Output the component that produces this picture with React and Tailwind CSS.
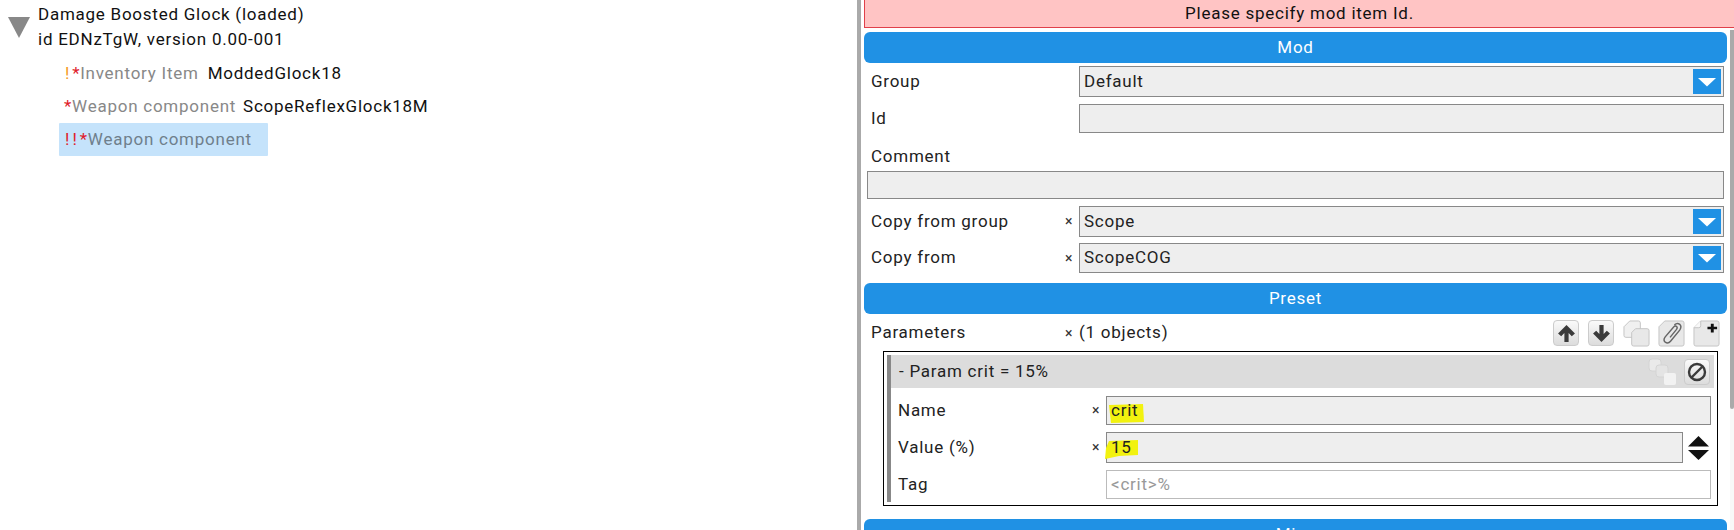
import React from 'react';

function Chevron() {
    return (
        <span className="absolute right-[2px] top-[2px] bottom-[2px] w-[28px] bg-[#2091e4] flex items-center justify-center">
            <svg width="20" height="10" viewBox="0 0 20 10">
                <polygon points="1,1 19,1 10,9.5" fill="#fff" />
            </svg>
        </span>
    );
}

function Input({ value, select, className = '', children }) {
    return (
        <div className={`relative flex items-center pl-[4px] border border-[#888] bg-[#eee] text-[#222] ${className}`}>
            {children}
            <span className="relative">{value}</span>
            {select && <Chevron />}
        </div>
    );
}

function Row({ label, x, className = '', children }) {
    return (
        <div className={`flex items-center ${className}`}>
            <span className="w-[201px] pl-[7px] text-[#222]">{label}</span>
            <span className="w-[14px] text-[14px] text-[#333]">{x ? '×' : ''}</span>
            {children}
        </div>
    );
}

function Header({ title, className = '' }) {
    return (
        <div className={`h-[31px] rounded-[6px] bg-[#2091e4] text-white flex items-center justify-center ${className}`}>
            {title}
        </div>
    );
}

function IconButton({ children, className = '' }) {
    return (
        <div className={`w-[26px] h-[26px] rounded-[4px] border border-[#ccc] bg-gradient-to-b from-[#fafafa] to-[#dcdcdc] flex items-center justify-center ${className}`}>
            {children}
        </div>
    );
}

function Page({ children }) {
    return (
        <svg width="27" height="27" viewBox="0 0 28 28">
            {children}
        </svg>
    );
}

function ToolIcons() {
    return (
        <div className="flex items-center gap-[8px]">
            <IconButton>
                <svg width="19" height="19" viewBox="0 0 18 18"><path d="M9 1 L17 9 L14 11.5 L11 8.5 V17 H7 V8.5 L4 11.5 L1 9 Z" fill="#3b3b3b" /></svg>
            </IconButton>
            <IconButton className="ml-[1px]">
                <svg width="19" height="19" viewBox="0 0 18 18"><path d="M9 17 L17 9 L14 6.5 L11 9.5 V1 H7 V9.5 L4 6.5 L1 9 Z" fill="#3b3b3b" /></svg>
            </IconButton>
            <div className="ml-[1px] flex">
                <Page>
                    <path d="M7 1 H16 Q18 1 18 3 V18 H3 Q1 18 1 16 V7 Z" fill="#f0f0f0" stroke="#c4c4c4" />
                    <path d="M13 9 H25 Q27 9 27 11 V25 Q27 27 25 27 H11 Q9 27 9 25 V13 Z" fill="#e8e8e8" stroke="#c4c4c4" />
                </Page>
            </div>
            <Page>
                <path d="M7 1 H25 Q27 1 27 3 V25 Q27 27 25 27 H3 Q1 27 1 25 V7 Z" fill="#e8e8e8" stroke="#c4c4c4" />
                <path d="M12.5 18 L19 10 Q20.5 8 19.5 7 Q18 5.5 16 7.5 L7.5 17.5 Q5 21 7.5 23 Q10.5 25 13 22 L22.5 10.5 Q25 7 22.5 4.5 Q20 2.5 17 5" fill="none" stroke="#666" strokeWidth="1.5" />
            </Page>
            <Page>
                <path d="M8 1 H25 Q27 1 27 3 V25 Q27 27 25 27 H3 Q1 27 1 25 V8 Z" fill="#e8e8e8" stroke="#c4c4c4" />
                <path d="M1 8 H6 Q8 8 8 6 V1" fill="#f8f8f8" stroke="#c4c4c4" />
                <path d="M18.5 4 H21.5 V7 H25 V9.5 H21.5 V13 H18.5 V9.5 H15 V7 H18.5 Z" fill="#111" />
            </Page>
        </div>
    );
}

function ParamBox() {
    return (
        <div className="ml-[19px] mr-[9px] mt-[2px] h-[155px] border border-black p-[3px]">
            <div className="h-full border-l-[4px] border-[#888]">
                <div className="h-[33px] bg-[#dcdcdc] flex items-center justify-between pl-[8px] pr-[4px] text-[#222]">
                    <span>- Param crit = 15%</span>
                    <div className="flex items-center gap-[8px]">
                        <svg width="28" height="27" viewBox="0 0 28 27">
                            <rect x="1" y="1" width="12" height="12" rx="3" fill="#eaeaea" stroke="#d4d4d4" />
                            <rect x="8" y="7" width="12" height="12" rx="3" fill="#e4e4e4" stroke="#d4d4d4" />
                            <rect x="16" y="15" width="12" height="12" rx="2" fill="#f2f2f2" />
                        </svg>
                        <IconButton>
                            <svg width="20" height="20" viewBox="0 0 20 20">
                                <circle cx="10" cy="10" r="8" fill="none" stroke="#3b3b3b" strokeWidth="2.4" />
                                <line x1="4.5" y1="15.5" x2="15.5" y2="4.5" stroke="#3b3b3b" strokeWidth="2.4" />
                            </svg>
                        </IconButton>
                    </div>
                </div>
                <div className="flex items-center mt-[8px] h-[29px] pr-[3px]">
                    <span className="w-[201px] pl-[7px] text-[#222]">Name</span>
                    <span className="w-[14px] text-[14px] text-[#333]">×</span>
                    <Input value="crit" className="flex-1 h-full">
                        <svg className="absolute left-[2px] top-[7px]" width="36" height="20" viewBox="0 0 36 20">
                            <path d="M0 1 L34 0 L35 18 L2 19 Z" fill="#f2f20f" />
                        </svg>
                    </Input>
                </div>
                <div className="flex items-center mt-[7px] h-[31px] pr-[3px]">
                    <span className="w-[201px] pl-[7px] text-[#222]">Value (%)</span>
                    <span className="w-[14px] text-[14px] text-[#333]">×</span>
                    <Input value="15" className="flex-1 h-full mr-[3px]">
                        <svg className="absolute left-[-2px] top-[7px]" width="36" height="20" viewBox="0 0 36 20">
                            <path d="M4 1 L33 0 L33 15 L14 16 L0 19 L1 8 Z" fill="#f2f20f" />
                        </svg>
                    </Input>
                    <svg width="25" height="26" viewBox="0 0 25 26">
                        <polygon points="2,11.5 12.5,1 23,11.5" fill="#111" />
                        <polygon points="2,15 23,15 12.5,25" fill="#111" />
                    </svg>
                </div>
                <div className="flex items-center mt-[7px] h-[29px] pr-[3px]">
                    <span className="w-[201px] pl-[7px] text-[#222]">Tag</span>
                    <span className="w-[14px]"></span>
                    <div className="flex-1 h-full flex items-center pl-[4px] border border-[#bbb] bg-white text-[#999]">&lt;crit&gt;%</div>
                </div>
            </div>
        </div>
    );
}

export default function App() {
    return (
        <div className="relative flex h-[530px] w-[1734px] overflow-hidden bg-white text-[17px] tracking-[0.75px] font-['Roboto','Liberation_Sans',sans-serif]">
            <div className="w-[857px] shrink-0 pl-[8px] pt-[2px] text-[#111]">
                <div className="flex">
                    <svg className="mt-[15px] mr-[8px]" width="22" height="21" viewBox="0 0 22 21">
                        <polygon points="0,0 22,0 11,21" fill="#888" />
                    </svg>
                    <div className="leading-[25px]">
                        <div>Damage Boosted Glock (loaded)</div>
                        <div>id EDNzTgW, version 0.00-001</div>
                    </div>
                </div>
                <div className="ml-[51px] mt-[5px] w-fit min-w-[209px]">
                    <div className="h-[33px] pl-[6px] flex items-center gap-[9px]">
                        <span><span className="text-[#f59a23] mr-[2px]">!</span><span className="text-[#e0202a]">*</span><span className="text-[#888]">Inventory Item</span></span>
                        <span>ModdedGlock18</span>
                    </div>
                    <div className="h-[33px] pl-[5px] flex items-center gap-[7px] whitespace-nowrap">
                        <span><span className="text-[#e0202a]">*</span><span className="text-[#888]">Weapon component</span></span>
                        <span>ScopeReflexGlock18M</span>
                    </div>
                    <div className="h-[33px] w-[209px] pl-[6px] flex items-center bg-[#c5e3fb] rounded-[1px]">
                        <span className="text-[#e0202a] tracking-[3px]">!!</span><span className="text-[#e0202a]">*</span><span className="text-[#6f7f8c]">Weapon component</span>
                    </div>
                </div>
            </div>
            <div className="w-[4px] shrink-0 bg-[#aaa]"></div>
            <div className="flex-1 flex flex-col min-w-0 pl-[3px]">
                <div className="h-[28px] shrink-0 bg-[#ffc4c4] border-b border-l border-[#e0404a] flex items-center justify-center text-[#111]">
                    Please specify mod item Id.
                </div>
                <div className="flex-1 flex min-h-0">
                    <div className="flex-1 min-w-0 pt-[4px]">
                        <Header title="Mod" />
                        <Row label="Group" className="mt-[3px] h-[31px]">
                            <Input value="Default" select className="flex-1 h-full mr-[3px]" />
                        </Row>
                        <Row label="Id" className="mt-[7px] h-[29px]">
                            <Input className="flex-1 h-full mr-[3px]" />
                        </Row>
                        <div className="h-[38px] flex items-center pl-[7px] pt-[9px] text-[#222]">Comment</div>
                        <Input className="ml-[3px] mr-[3px] h-[28px]" />
                        <Row label="Copy from group" x className="mt-[7px] h-[31px]">
                            <Input value="Scope" select className="flex-1 h-full mr-[3px]" />
                        </Row>
                        <Row label="Copy from" x className="mt-[6px] h-[30px]">
                            <Input value="ScopeCOG" select className="flex-1 h-full mr-[3px]" />
                        </Row>
                        <Header title="Preset" className="mt-[10px]" />
                        <Row label="Parameters" x className="mt-[3px] h-[32px]">
                            <span className="text-[#222]">(1 objects)</span>
                            <div className="ml-auto mr-[7px]"><ToolIcons /></div>
                        </Row>
                        <ParamBox />
                        <Header title="Misc" className="mt-[13px]" />
                    </div>
                    <div className="w-[4px] shrink-0 ml-[3px] bg-[#f8f8f8]">
                        <div className="h-[379px] mt-[2px] rounded-b-[2px] bg-[#aaa]"></div>
                    </div>
                </div>
            </div>
        </div>
    );
}
